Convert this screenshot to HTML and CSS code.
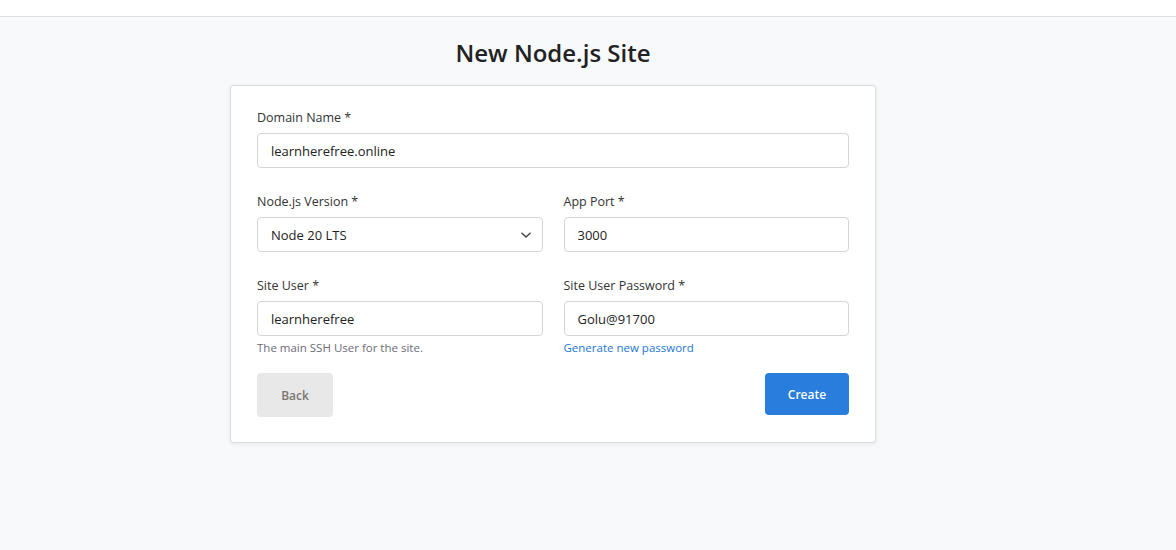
FILE: index.html
```html
<!DOCTYPE html>
<html>
<head>
<meta charset="utf-8">
<link rel="stylesheet" href="styles.css">
</head>
<body>
<header class="topbar"></header>
<main class="page">
  <h1 class="title">New Node.js Site</h1>
  <form class="card">
    <div class="field">
      <label class="label">Domain Name *</label>
      <div class="input">learnherefree.online</div>
    </div>
    <div class="grid">
      <div class="field">
        <label class="label">Node.js Version *</label>
        <div class="input select">
          <span>Node 20 LTS</span>
          <svg class="chev" width="12" height="8" viewBox="0 0 12 8"><path d="M1.5 1.8 L6 6 L10.5 1.8" fill="none" stroke="#444" stroke-width="1.4"/></svg>
        </div>
      </div>
      <div class="field">
        <label class="label">App Port *</label>
        <div class="input">3000</div>
      </div>
      <div class="field">
        <label class="label">Site User *</label>
        <div class="input">learnherefree</div>
        <div class="help">The main SSH User for the site.</div>
      </div>
      <div class="field">
        <label class="label">Site User Password *</label>
        <div class="input">Golu@91700</div>
        <a class="link">Generate new password</a>
      </div>
    </div>
    <div class="actions">
      <button type="button" class="btn back">Back</button>
      <button type="button" class="btn create">Create</button>
    </div>
  </form>
</main>
</body>
</html>
```
FILE: styles.css
```css
* { box-sizing: border-box; }
body {
  margin: 0;
  background: #f8f9fb;
  font-family: "Open Sans", "Noto Sans", sans-serif;
  color: #333;
  height: 550px;
}
.topbar {
  height: 17px;
  background: #fff;
  border-bottom: 1px solid #dedede;
}
.page {
  display: flex;
  flex-direction: column;
  align-items: center;
  padding-right: 70px;
}
.title {
  margin: 20px 0 16px;
  font-size: 24px;
  line-height: 32px;
  font-weight: 600;
  color: #222;
}
.card {
  width: 646px;
  background: #fff;
  border: 1px solid #dcdcdc;
  border-radius: 3px;
  box-shadow: 0 1px 4px rgba(0,0,0,0.08);
  padding: 23px 26px 25px;
}
.field { display: flex; flex-direction: column; margin-bottom: 25px; }
.grid {
  display: grid;
  grid-template-columns: 1fr 1fr;
  column-gap: 21px;
}
.grid .field:nth-child(n+3) { margin-bottom: 17px; }
.label {
  font-size: 12.5px;
  line-height: 18px;
  color: #333;
  margin-bottom: 6px;
}
.input {
  height: 35px;
  border: 1px solid #d3d5da;
  border-radius: 4px;
  padding: 0 13px;
  display: flex;
  align-items: center;
  font-size: 13px;
  color: #222;
}
.select { justify-content: space-between; padding-right: 10px; }
.chev { display: block; }
.help {
  margin-top: 4px;
  font-size: 11.5px;
  line-height: 16px;
  color: #6c6b78;
}
.link {
  margin-top: 4px;
  font-size: 11.5px;
  line-height: 16px;
  color: #2277d6;
}
.actions {
  display: flex;
  justify-content: space-between;
  align-items: flex-start;
}
.btn {
  border: none;
  border-radius: 4px;
  font-family: inherit;
  font-size: 12px;
  font-weight: 600;
  cursor: pointer;
}
.back {
  width: 76px;
  height: 44px;
  background: #e8e8e8;
  color: #7a7670;
}
.create {
  width: 84px;
  height: 42px;
  background: #287ddd;
  color: #fff;
}
```
